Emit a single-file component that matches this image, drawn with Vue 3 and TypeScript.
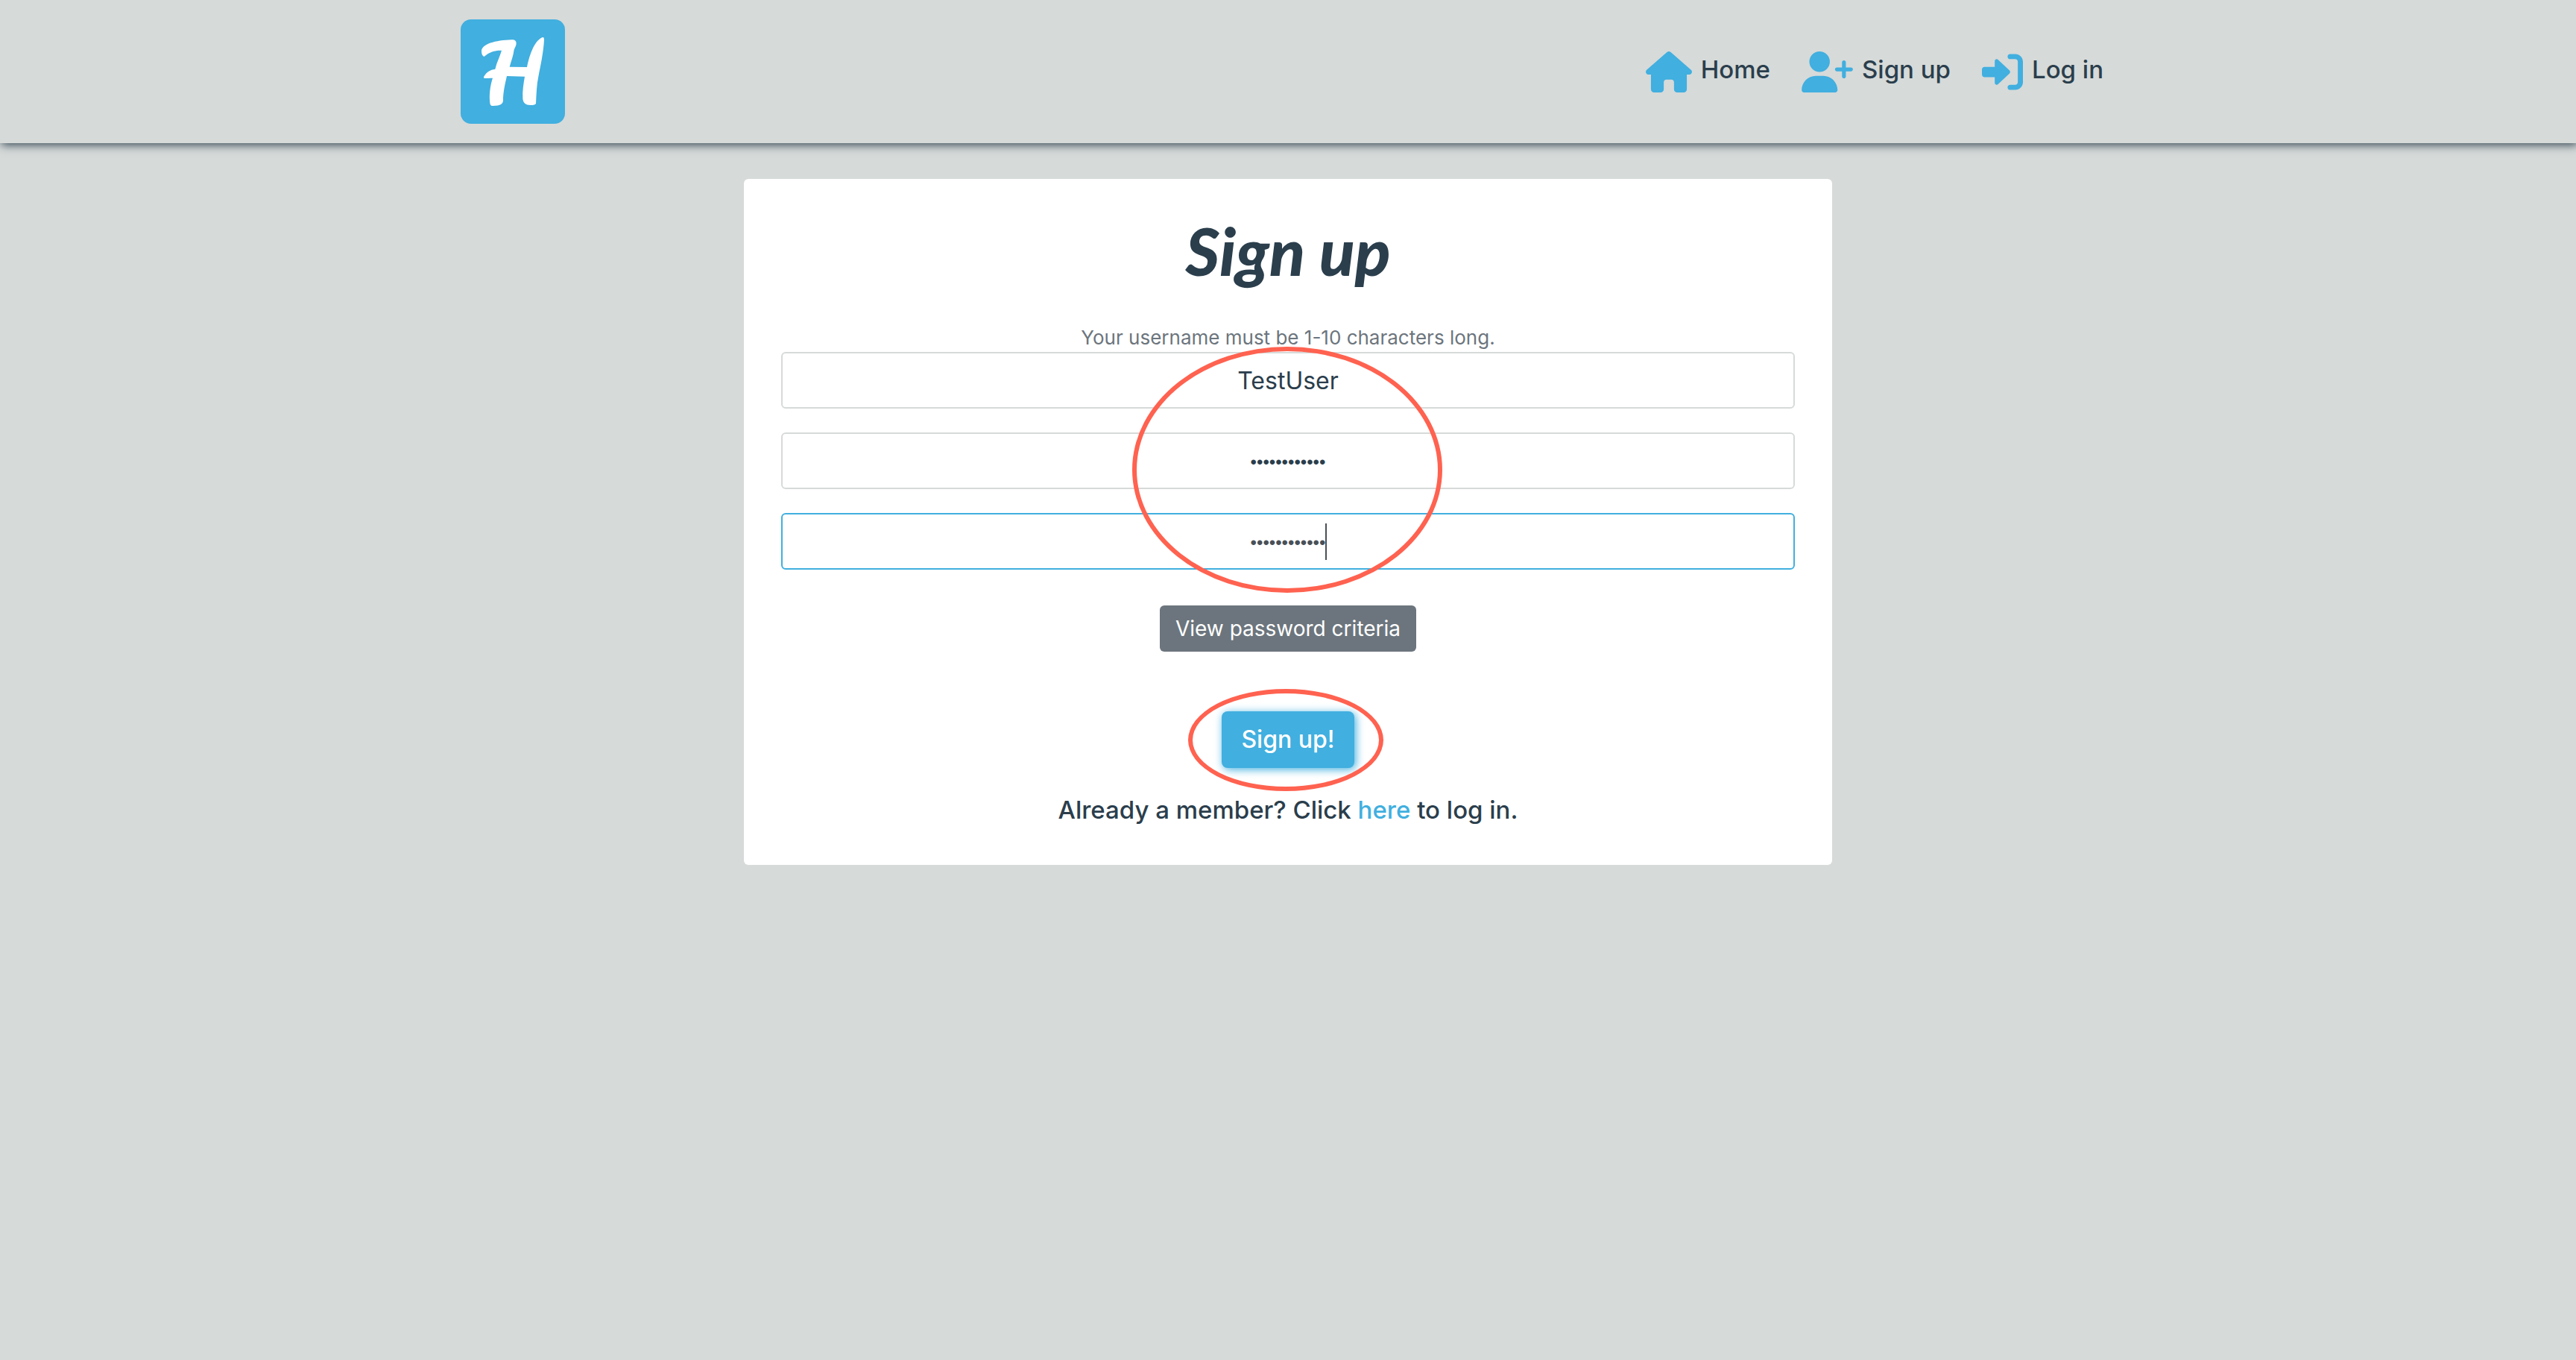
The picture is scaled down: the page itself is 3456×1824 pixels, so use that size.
<script setup lang="ts">
import { ref } from 'vue'

interface NavItem {
  label: string
  viewBox: string
  width: number
  path: string
}

const navItems: NavItem[] = [
  {
    label: 'Home',
    viewBox: '0 0 576 512',
    width: 62,
    path: 'M575.8 255.5c0 18-15 32.1-32 32.1h-32l.7 160.2c0 2.7-.2 5.4-.5 8.1V472c0 22.1-17.9 40-40 40H456c-1.1 0-2.2 0-3.3-.1c-1.4 .1-2.8 .1-4.2 .1H416 392c-22.1 0-40-17.9-40-40V448 384c0-17.7-14.3-32-32-32H256c-17.7 0-32 14.3-32 32v64 24c0 22.1-17.9 40-40 40H160 128.1c-1.5 0-3-.1-4.5-.2c-1.2 .1-2.4 .2-3.6 .2H104c-22.1 0-40-17.9-40-40V360c0-.9 0-1.9 .1-2.8V287.6H32c-18 0-32-14-32-32.1c0-9 3-17 10-24L266.4 8c7-7 15-8 22-8s15 2 21 7L564.8 231.5c8 7 12 15 11 24z',
  },
  {
    label: 'Sign up',
    viewBox: '0 0 640 512',
    width: 69,
    path: 'M96 128a128 128 0 1 1 256 0A128 128 0 1 1 96 128zM0 482.3C0 383.8 79.8 304 178.3 304h91.4C368.2 304 448 383.8 448 482.3c0 16.4-13.3 29.7-29.7 29.7H29.7C13.3 512 0 498.7 0 482.3zM504 312V248H440c-13.3 0-24-10.7-24-24s10.7-24 24-24h64V136c0-13.3 10.7-24 24-24s24 10.7 24 24v64h64c13.3 0 24 10.7 24 24s-10.7 24-24 24H552v64c0 13.3-10.7 24-24 24s-24-10.7-24-24z',
  },
  {
    label: 'Log in',
    viewBox: '0 0 512 512',
    width: 55,
    path: 'M344.7 238.5l-144.1-136C193.7 95.97 183.4 94.17 174.6 97.95C165.8 101.8 160.1 110.4 160.1 120V192H32.02C14.33 192 0 206.3 0 224v64c0 17.68 14.33 32 32.02 32h128.1v72c0 9.578 5.707 18.25 14.51 22.05c8.803 3.781 19.03 1.984 26-4.594l144.1-136C354.3 264.4 354.3 247.6 344.7 238.5zM416 32h-64c-17.67 0-32 14.33-32 32s14.33 32 32 32h64c17.67 0 32 14.33 32 32v256c0 17.67-14.33 32-32 32h-64c-17.67 0-32 14.33-32 32s14.33 32 32 32h64c53.02 0 96-42.98 96-96V128C512 74.98 469 32 416 32z',
  },
]

const username = ref('TestUser')
const password = ref('testpassword')
const confirmation = ref('testpassword')
</script>

<template>
  <header class="header">
    <div class="header-inner">
      <a class="brand" href="#" aria-label="Homepage">
        <svg class="logo" viewBox="0 0 420 420" aria-hidden="true">
          <rect width="420" height="420" rx="42" fill="#41afdf" />
          <path
            fill="#fff"
            d="M94 150C87 146 84 138 84 128C84 99 140 84 205 82C216 80 224 86 224 96C224 106 219 112 215 122C212 146 203 168 197 191L267 192C279 134 300 83 330 72C334 71 336 74 336 82C334 130 321 190 313 230C306 262 305 300 303 338C302 343 294 345 281 345C262 345 251 336 250 318C248 290 253 258 258 230L186 228C177 266 171 296 171 325C171 340 162 348 129 348C119 348 118 340 117 326C115 292 121 260 129 236C116 236 106 237 96 237C92 236 92 232 95 228C104 213 119 202 139 200C145 172 158 150 165 125C140 124 118 129 94 150Z"
          />
        </svg>
      </a>
      <nav class="nav">
        <a v-for="item in navItems" :key="item.label" class="nav-link" href="#">
          <svg :viewBox="item.viewBox" :width="item.width" height="55" fill="currentColor" aria-hidden="true">
            <path :d="item.path" />
          </svg>
          <span>{{ item.label }}</span>
        </a>
      </nav>
    </div>
  </header>

  <main class="card">
    <h1>Sign up</h1>
    <form @submit.prevent>
      <label class="hint" for="username">Your username must be 1-10 characters long.</label>
      <div class="fields">
        <input id="username" v-model="username" type="text" autocomplete="off" />
        <input v-model="password" class="secret" type="password" aria-label="Password" autocomplete="off" />
        <div class="focused">
          <input v-model="confirmation" class="secret" type="password" aria-label="Confirm password" autocomplete="off" />
          <span class="caret"></span>
        </div>
        <span class="ring ring-fields"></span>
      </div>
      <button class="criteria" type="button">View password criteria</button>
      <div class="submit-wrap">
        <button class="submit" type="submit">Sign up!</button>
        <span class="ring ring-submit"></span>
      </div>
    </form>
    <p class="member">Already a member? Click <a href="#">here</a> to log in.</p>
  </main>
</template>

<style>
body {
  background: #d6dad9;
}
</style>

<style scoped>
.header,
.card,
.card input,
.card button {
  box-sizing: border-box;
  font-family: Inter, 'Open Sans', sans-serif;
  font-size: 32px;
  line-height: 48px;
  color: #2b3e4c;
}

.header {
  padding: 26px 30px;
  background: #d6dad9;
  box-shadow: 2px 2px 12px #2b3e4c;
}

.header-inner {
  display: flex;
  align-items: center;
  justify-content: space-between;
  max-width: 2220px;
  margin: 0 auto;
}

.brand,
.logo {
  display: block;
  width: 140px;
  height: 140px;
}

.nav {
  display: flex;
  gap: 42px;
  padding-right: 16px;
}

.nav-link {
  display: flex;
  align-items: flex-start;
  gap: 12px;
  font-size: 33px;
  font-weight: 500;
  color: #2b3e4c;
  text-decoration: none;
}

.nav-link svg {
  color: #41afdf;
}

.card {
  max-width: 1460px;
  margin: 48px auto 0;
  padding: 48px 50px;
  border-radius: 6px;
  background: #fff;
  text-align: center;
}

h1 {
  margin: 0 0 50px;
  font-family: Lato, sans-serif;
  font-size: 88px;
  font-style: italic;
  font-weight: 900;
  line-height: 96px;
}

form {
  display: flex;
  flex-direction: column;
  align-items: center;
}

.hint {
  font-size: 26px;
  line-height: 38px;
  color: #6c757d;
}

.fields {
  position: relative;
  display: flex;
  flex-direction: column;
  gap: 32px;
  width: 100%;
  margin-bottom: 48px;
}

.card input {
  display: block;
  width: 100%;
  height: 76px;
  padding: 12px 24px;
  border: 2px solid #d6dad9;
  border-radius: 6px;
  outline: none;
  background: #fff;
  text-align: center;
}

.card .secret {
  padding: 14px 24px 10px;
  font-family: 'Liberation Sans', sans-serif;
  font-size: 24px;
}

.focused {
  position: relative;
}

.card .focused input {
  border-color: #41afdf;
  color: #495057;
}

.caret {
  position: absolute;
  top: 14px;
  left: calc(50% + 50px);
  width: 2px;
  height: 49px;
  background: #495057;
}

.ring {
  position: absolute;
  box-sizing: border-box;
  border: 6px solid #ff6250;
  border-radius: 50%;
  pointer-events: none;
}

.ring-fields {
  top: -7px;
  left: calc(50% - 209px);
  width: 416px;
  height: 330px;
}

.ring-submit {
  top: -30px;
  left: calc(50% - 134px);
  width: 262px;
  height: 137px;
}

.card .criteria {
  height: 62px;
  margin-bottom: 80px;
  padding: 0 21px;
  border: 0;
  border-radius: 6px;
  background: #6c757d;
  font-size: 28px;
  color: #fff;
}

.submit-wrap {
  position: relative;
}

.card .submit {
  display: block;
  height: 76px;
  padding: 0 26px;
  border: 0;
  border-radius: 8px;
  background: #41afdf;
  box-shadow: 2px 2px 12px #41afdf;
  font-weight: 500;
  color: #fff;
}

.member {
  margin: 32px 0 0;
  padding-bottom: 2px;
  font-size: 33px;
  font-weight: 500;
}

.member a {
  color: #41afdf;
  text-decoration: none;
}
</style>
